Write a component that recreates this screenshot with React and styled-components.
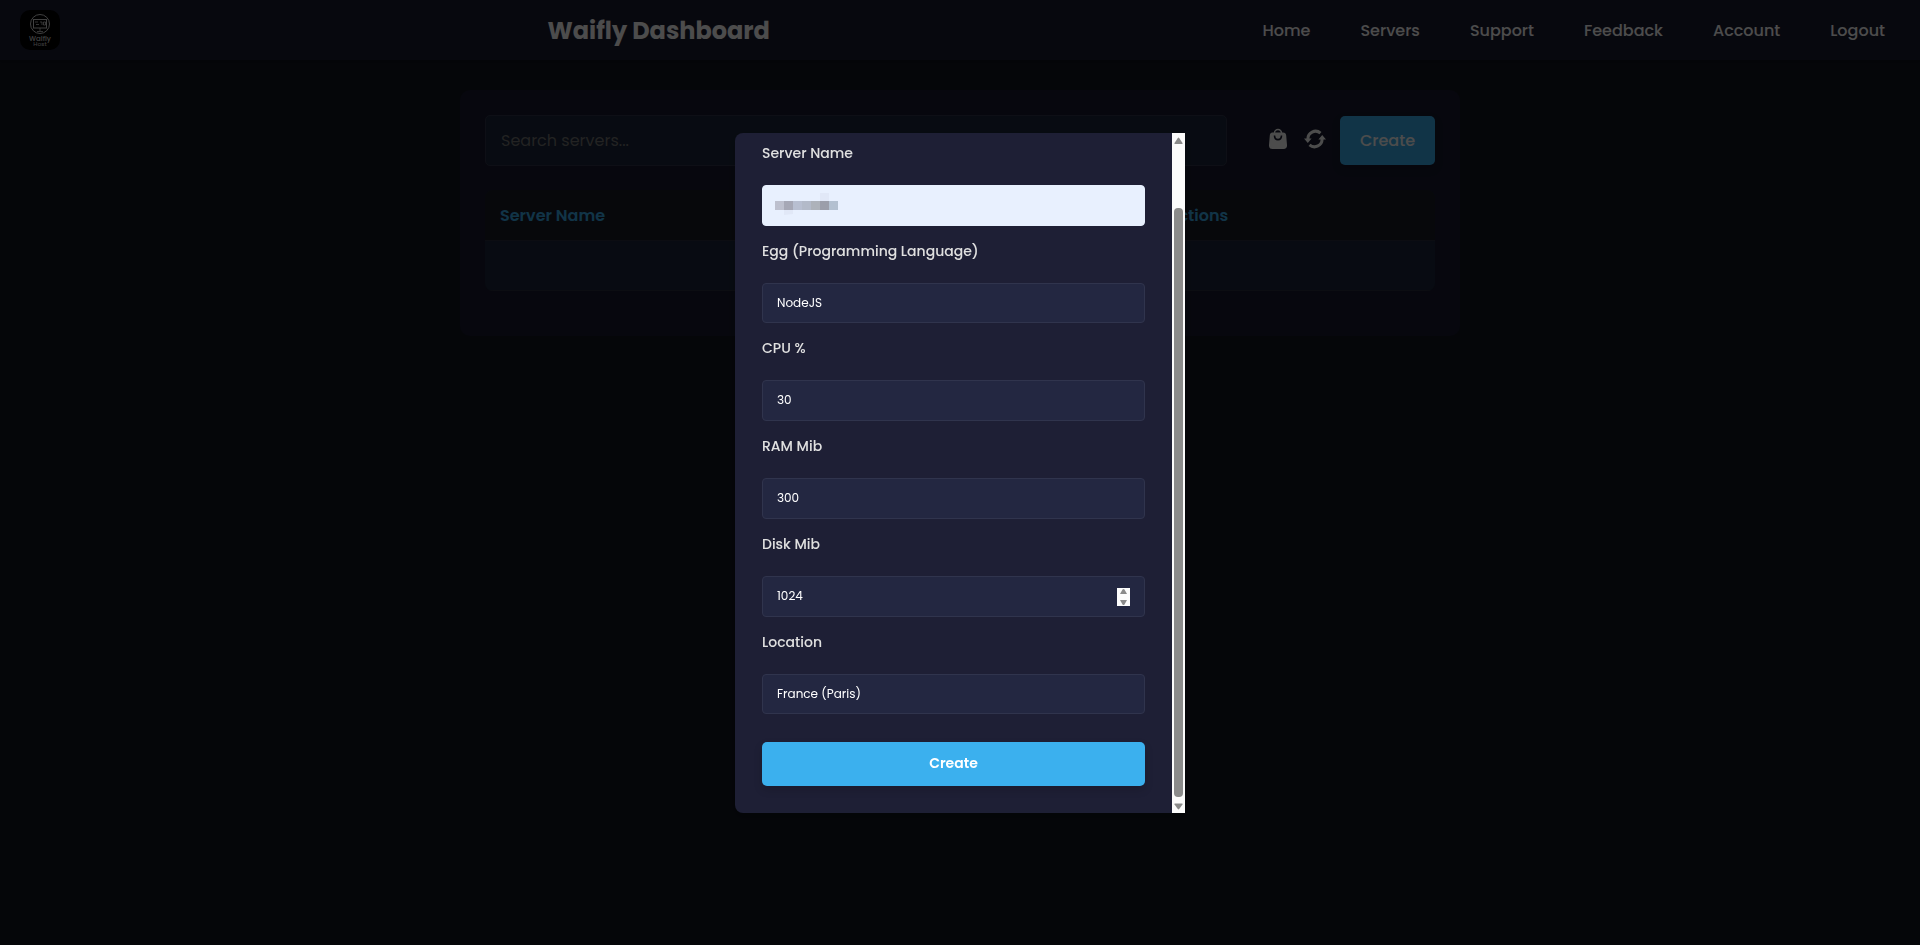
import React, { useState } from "react";
import styled, { createGlobalStyle } from "styled-components";

const GlobalStyle = createGlobalStyle`
    *, *::before, *::after {
        box-sizing: border-box;
    }
    body {
        margin: 0;
        min-height: 100vh;
        background: #121520;
        color: #ffffff;
        font-family: Poppins, Inter, "Open Sans", sans-serif;
        font-size: 16px;
    }
    button, input, select {
        font-family: inherit;
    }
`;

const navLinks = ["Home", "Servers", "Support", "Feedback", "Account", "Logout"];

const fields = [
    { id: "egg", label: "Egg (Programming Language)", options: ["NodeJS"] },
    { id: "cpu", label: "CPU %", type: "number", value: 30 },
    { id: "ram", label: "RAM Mib", type: "number", value: 300 },
    { id: "disk", label: "Disk Mib", type: "number", value: 1024, spinner: true },
    { id: "location", label: "Location", options: ["France (Paris)"] },
];

const HeaderStyles = styled.header`
    display: flex;
    align-items: center;
    justify-content: space-between;
    height: 60px;
    padding: 0 30px 0 20px;
    background: #1a1b31;
    box-shadow: 0 2px 4px rgba(0, 0, 0, 0.2);
    .title {
        margin: 0;
        padding-top: 2px;
        font-size: 24px;
        line-height: 36px;
        font-weight: 700;
    }
    .menu {
        display: flex;
        gap: 40px;
        margin: 0;
        padding: 0;
        list-style: none;
    }
    .menu-link {
        padding: 10px 5px;
        color: #ffffff;
        font-weight: 500;
        text-decoration: none;
    }
`;

const Logo = styled.svg`
    display: block;
    width: 40px;
    height: 40px;
    border-radius: 10px;
    background: #000000;
`;

const Panel = styled.main`
    max-width: 1000px;
    margin: 30px auto;
    padding: 25px 25px 45px;
    border-radius: 10px;
    background: #181a2f;
`;

const Toolbar = styled.div`
    display: flex;
    align-items: center;
    margin-bottom: 24px;
`;

const Search = styled.input`
    flex: 1;
    height: 51px;
    padding: 0 15px;
    border: 1px solid #30344a;
    border-radius: 5px;
    background: #1b273c;
    color: #ffffff;
    font-size: 16px;
    &::placeholder {
        color: #757575;
    }
`;

const Actions = styled.div`
    display: flex;
    gap: 9px;
    margin: 0 11px 0 37px;
`;

const IconButton = styled.button`
    display: flex;
    align-items: center;
    justify-content: center;
    width: 28px;
    height: 28px;
    padding: 0 0 3px;
    border: 0;
    background: none;
    color: #ffffff;
    svg {
        width: 22px;
        height: 22px;
    }
`;

const Button = styled.button`
    width: ${(props) => (props.$wide ? "100%" : "95px")};
    height: ${(props) => (props.$wide ? "44px" : "49px")};
    padding: 0;
    border: 0;
    border-radius: 5px;
    background: #3bb0ee;
    color: #ffffff;
    font-size: ${(props) => (props.$wide ? "14px" : "16px")};
    font-weight: ${(props) => (props.$wide ? 600 : 500)};
    box-shadow: 0 4px 8px rgba(0, 0, 0, 0.15);
`;

const ServerTable = styled.table`
    width: 100%;
    border-spacing: 0;
    border-radius: 8px;
    overflow: hidden;
    background: #1b273c;
    th,
    td {
        height: 50px;
        padding: 0 15px;
        border-bottom: 1px solid #2a2d3c;
        text-align: left;
    }
    th {
        height: 51px;
        background: #1a1c26;
        color: #3bb0ee;
        font-size: 16px;
        font-weight: 600;
    }
    th:last-child {
        width: 283px;
    }
`;

const Overlay = styled.div`
    position: fixed;
    inset: 0;
    display: flex;
    align-items: center;
    justify-content: center;
    background: rgba(0, 0, 0, 0.7);
`;

const Modal = styled.div`
    display: flex;
    width: 450px;
    border-radius: 8px 0 0 8px;
    overflow: hidden;
    background: #1e1f35;
    box-shadow: 0 4px 8px rgba(0, 0, 0, 0.2);
`;

const Form = styled.form`
    flex: 1;
    padding: 10px 27px 27px;
`;

const Field = styled.div`
    display: flex;
    flex-direction: column;
    gap: 22px;
    margin-bottom: 15px;
    &:last-of-type {
        margin-bottom: 28px;
    }
    label {
        color: #e0e0e0;
        font-size: 14px;
        line-height: 20px;
        font-weight: 500;
    }
`;

const Control = styled.input`
    appearance: none;
    width: 100%;
    height: 41px;
    padding: 0 14px;
    border: 1px solid ${(props) => (props.$filled ? "#e8f0fe" : "#30344d")};
    border-radius: 4px;
    background: ${(props) => (props.$filled ? "#e8f0fe" : "#232741")};
    color: ${(props) => (props.$filled ? "#000000" : "#ffffff")};
    font-size: 12px;
    &[type="number"] {
        appearance: textfield;
    }
    &::-webkit-inner-spin-button {
        display: none;
    }
`;

const Select = styled(Control)`
    height: 40px;
`;

const ControlBox = styled.div`
    position: relative;
    display: flex;
`;

const Spinner = styled.svg`
    position: absolute;
    right: 15px;
    top: 12px;
    width: 13px;
    height: 18px;
`;

const Redacted = styled.svg`
    position: absolute;
    left: 13px;
    top: 8px;
    width: 63px;
    height: 23px;
`;

const ScrollBar = styled.div`
    display: flex;
    flex-direction: column;
    width: 13px;
    padding: 0 2px;
    background: #fcfcfc;
    svg {
        display: block;
        width: 9px;
        height: 16px;
    }
    .before {
        flex: 59;
    }
    .thumb {
        flex: 589;
        border-radius: 4px;
        background: #8b8b8b;
    }
`;

const WaiflyLogo = () => (
    <Logo viewBox="0 0 40 40" role="img" aria-label="Waifly Host">
        <g fill="none" stroke="#d8d8d8">
            <circle cx="20" cy="14" r="9.5" />
            <rect x="13.5" y="9.5" width="13" height="8.5" />
            <path d="M15 12h3M16 14.500h3M20 12h2v3M23.500 12h2v3h-2zM20 18v3M17 21.500h6" strokeWidth=".8" />
        </g>
        <g fill="#d8d8d8" fontFamily="Poppins, Inter, sans-serif" fontSize="7" textAnchor="middle">
            <text x="20" y="31" fontWeight="500">Waifly</text>
            <text x="20" y="36" fontSize="6">Host</text>
        </g>
    </Logo>
);

const BagIcon = () => (
    <svg viewBox="0 0 22 22" fill="none">
        <path d="M7.500 6V5a3.500 3.500 0 0 1 7 0v1" stroke="currentColor" strokeWidth="1.4" />
        <path
            fillRule="evenodd"
            d="M6 4.500h10c2 0 3 1 3.200 3l.8 9.500c.2 2.500-1 4-3.500 4h-11C3 21 1.800 19.500 2 17l.8-9.500c.2-2 1.200-3 3.200-3zM6.700 7.500c0 3 1.500 5 4.300 5s4.300-2 4.300-5h-1.600c0 2-1 3.300-2.700 3.300S8.300 9.500 8.300 7.500z"
            fill="currentColor"
        />
    </svg>
);

const RefreshIcon = () => (
    <svg viewBox="0 0 22 22" fill="none">
        <path d="M4 11.500A7.500 7.500 0 0 1 16.500 5.200M18 10.500A7.500 7.500 0 0 1 5.500 16.800" stroke="currentColor" strokeWidth="3" />
        <path d="M0 10.500h7.600L3.800 15zM14.400 11.500H22L18.200 7z" fill="currentColor" />
    </svg>
);

const Arrow = ({ down }) => (
    <svg viewBox="0 0 9 16" aria-hidden="true">
        <path
            d={down ? "M1 6.500h7q1 0 .5 1L5.200 12q-.7.800-1.400 0L.5 7.500Q0 6.500 1 6.500z" : "M1 11h7q1 0 .5-1L5.200 5q-.7-.800-1.400 0L.5 10Q0 11 1 11z"}
            fill="#8b8b8b"
        />
    </svg>
);

const Header = () => (
    <HeaderStyles>
        <WaiflyLogo />
        <h1 className="title">Waifly Dashboard</h1>
        <nav>
            <ul className="menu">
                {navLinks.map((item) => (
                    <li key={item}>
                        <a className="menu-link" href={`#${item.toLowerCase()}`}>
                            {item}
                        </a>
                    </li>
                ))}
            </ul>
        </nav>
    </HeaderStyles>
);

const FormField = ({ field }) => {
    const [value, setValue] = useState(field.value ?? field.options?.[0]);
    const onChange = (e) => setValue(e.target.value);
    return (
        <Field>
            <label htmlFor={field.id}>{field.label}</label>
            <ControlBox>
                {field.options ? (
                    <Select as="select" id={field.id} value={value} onChange={onChange}>
                        {field.options.map((option) => (
                            <option key={option}>{option}</option>
                        ))}
                    </Select>
                ) : (
                    <Control id={field.id} type={field.type} value={value} onChange={onChange} />
                )}
                {field.spinner && (
                    <Spinner viewBox="0 0 13 18" aria-hidden="true">
                        <path d="M0 0h13v18H0z" fill="#fcfcfc" />
                        <path d="M3 6h7L7.500 1.500q-1-1-2 0zM3 12h7l-2.500 4.500q-1 1-2 0z" fill="#8b8b8b" />
                    </Spinner>
                )}
            </ControlBox>
        </Field>
    );
};

// the server name stays hidden behind these blocks
const blocks = ["#bdc0ce", "#a6a8b6", "#b8bfd1", "#b3bac9", "#adb2ba", "#9b9eaa", "#b3c0d0"];

const CreateModal = () => (
    <Overlay>
        <Modal role="dialog" aria-label="Create server">
            <Form onSubmit={(e) => e.preventDefault()}>
                <Field>
                    <label htmlFor="name">Server Name</label>
                    <ControlBox>
                        <Control id="name" type="text" $filled />
                        <Redacted viewBox="0 0 63 23" aria-hidden="true">
                            <path d="M45 0h9v8h-9zM9 17h9v4l-9 1z" fill="#e1e8f7" />
                            {blocks.map((color, i) => (
                                <rect key={color} x={i * 9} y="8" width="9" height="9" fill={color} />
                            ))}
                        </Redacted>
                    </ControlBox>
                </Field>
                {fields.map((field) => (
                    <FormField key={field.id} field={field} />
                ))}
                <Button type="submit" $wide>
                    Create
                </Button>
            </Form>
            <ScrollBar>
                <Arrow />
                <div className="before" />
                <div className="thumb" />
                <Arrow down />
            </ScrollBar>
        </Modal>
    </Overlay>
);

const App = () => (
    <>
        <GlobalStyle />
        <Header />
        <Panel>
            <Toolbar>
                <Search type="text" placeholder="Search servers..." aria-label="Search servers" />
                <Actions>
                    <IconButton type="button" aria-label="Shop">
                        <BagIcon />
                    </IconButton>
                    <IconButton type="button" aria-label="Refresh">
                        <RefreshIcon />
                    </IconButton>
                </Actions>
                <Button type="button">Create</Button>
            </Toolbar>
            <ServerTable>
                <thead>
                    <tr>
                        <th>Server Name</th>
                        <th>Actions</th>
                    </tr>
                </thead>
                <tbody>
                    <tr>
                        <td />
                        <td />
                    </tr>
                </tbody>
            </ServerTable>
        </Panel>
        <CreateModal />
    </>
);

export default App;
